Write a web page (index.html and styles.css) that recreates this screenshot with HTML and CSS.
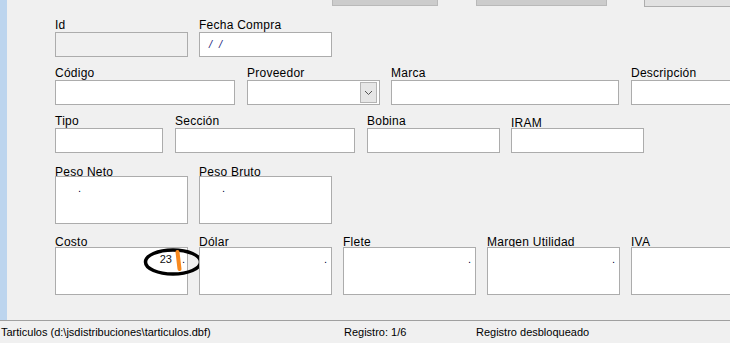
FILE: index.html
```html
<!DOCTYPE html>
<html lang="es">
<head>
    <meta charset="UTF-8">
    <title>Articulos</title>
    <link rel="stylesheet" href="styles.css">
</head>
<body>
    <div class="window">
        <div class="main">
            <div class="strip"></div>
            <div class="form">
                <div class="toolbar">
                    <div class="tab tab-one"></div>
                    <div class="tab tab-two"></div>
                    <div class="tab tab-three"></div>
                </div>

                <div class="row row-1">
                    <div class="field w133">
                        <label>Id</label>
                        <div class="box disabled"></div>
                    </div>
                    <div class="field w133">
                        <label>Fecha Compra</label>
                        <div class="box"><span class="date">/ /</span></div>
                    </div>
                </div>

                <div class="row row-2">
                    <div class="field w180">
                        <label>Código</label>
                        <div class="box"></div>
                    </div>
                    <div class="field w133">
                        <label>Proveedor</label>
                        <div class="box combo">
                            <span class="combo-btn">
                                <svg width="9" height="6" viewBox="0 0 9 6"><path d="M1 1l3.5 3.5L8 1" fill="none" stroke="#555" stroke-width="1"/></svg>
                            </span>
                        </div>
                    </div>
                    <div class="field w228 pull">
                        <label>Marca</label>
                        <div class="box"></div>
                    </div>
                    <div class="field w133">
                        <label>Descripción</label>
                        <div class="box"></div>
                    </div>
                </div>

                <div class="row row-3">
                    <div class="field w108">
                        <label>Tipo</label>
                        <div class="box"></div>
                    </div>
                    <div class="field w180">
                        <label>Sección</label>
                        <div class="box"></div>
                    </div>
                    <div class="field w133">
                        <label>Bobina</label>
                        <div class="box"></div>
                    </div>
                    <div class="field w133 pull">
                        <label class="low">IRAM</label>
                        <div class="box"></div>
                    </div>
                </div>

                <div class="row row-4">
                    <div class="field w133">
                        <label>Peso Neto</label>
                        <div class="box tall left"><span class="num">.</span></div>
                    </div>
                    <div class="field w133">
                        <label>Peso Bruto</label>
                        <div class="box tall left"><span class="num">.</span></div>
                    </div>
                </div>

                <div class="row row-5">
                    <div class="field w133">
                        <label>Costo</label>
                        <div class="box tall right costo">
                            <span class="num dark">23</span><span class="gap"></span><span class="num">.</span>
                            <svg class="mark" width="64" height="32" viewBox="0 0 64 32">
                                <ellipse cx="31" cy="15" rx="27.5" ry="12" fill="none" stroke="#000" stroke-width="3.5"/>
                                <path d="M35.5 5L37.5 22" stroke="#f7891f" stroke-width="4" stroke-linecap="round"/>
                            </svg>
                        </div>
                    </div>
                    <div class="field w133">
                        <label>Dólar</label>
                        <div class="box tall right"><span class="num">.</span></div>
                    </div>
                    <div class="field w133">
                        <label>Flete</label>
                        <div class="box tall right"><span class="num">.</span></div>
                    </div>
                    <div class="field w133">
                        <label>Margen Utilidad</label>
                        <div class="box tall right"><span class="num">.</span></div>
                    </div>
                    <div class="field w133">
                        <label>IVA</label>
                        <div class="box tall"></div>
                    </div>
                </div>
            </div>
        </div>

        <footer class="status">
            <span class="status-file">Tarticulos (d:\jsdistribuciones\tarticulos.dbf)</span>
            <span class="status-rec">Registro: 1/6</span>
            <span class="status-lock">Registro desbloqueado</span>
        </footer>
    </div>
</body>
</html>
```

FILE: styles.css
```css
body {
    margin: 0;
    padding: 0;
    background: #f0f0f0;
    font-family: 'Liberation Sans', Arial, sans-serif;
    color: #000;
    overflow: hidden;
}

.window {
    width: 730px;
    height: 343px;
    display: flex;
    flex-direction: column;
    overflow: hidden;
}

.main {
    display: flex;
    height: 320px;
    border-bottom: 1px solid #a0a0a0;
}

.strip {
    width: 7px;
    flex-shrink: 0;
    background: #bdd5ee;
}

.form {
    flex: 1;
    padding-left: 48px;
    overflow: hidden;
}

/* tabs cut off at the top */
.toolbar {
    display: flex;
    height: 7px;
}

.tab {
    flex-shrink: 0;
    height: 6px;
    box-sizing: border-box;
    background: #cccccc;
    border: 1px solid #b9b9b9;
    border-top: none;
}

.tab-one {
    margin-left: 277px;
    width: 106px;
}

.tab-two {
    margin-left: 38px;
    width: 131px;
}

.tab-three {
    margin-left: 37px;
    width: 100px;
    height: 7px;
    background: #e1e1e1;
    border-color: #adadad;
}

.row {
    display: flex;
    gap: 11px;
}

.row-1 { margin-top: 11px; }
.row-2 { margin-top: 9px; gap: 12px; }
.row-3 { margin-top: 9px; gap: 12px; }
.row-4 { margin-top: 12px; }
.row-5 { margin-top: 11px; }

.field {
    display: flex;
    flex-direction: column;
    flex-shrink: 0;
}

.field.pull {
    margin-left: -1px;
}

.w108 { width: 108px; }
.w133 { width: 133px; }
.w180 { width: 180px; }
.w228 { width: 228px; }

label {
    display: block;
    height: 14px;
    line-height: 14px;
    font-size: 12px;
    letter-spacing: 0.25px;
    white-space: nowrap;
}

label.low {
    position: relative;
    top: 2px;
}

.row-4 label { margin-bottom: -3px; }
.row-5 label { margin-bottom: -2px; }

.box {
    position: relative;
    height: 25px;
    box-sizing: border-box;
    border: 1px solid #acacac;
    background: #fff;
}

.box.disabled {
    background: #f0f0f0;
}

.box.tall {
    height: 48px;
    display: flex;
    align-items: flex-start;
    padding-top: 5px;
}

.box.left {
    padding-left: 22px;
}

.box.right {
    justify-content: flex-end;
    padding-right: 4px;
}

.box.costo {
    padding-right: 2px;
}

.num {
    font-size: 11px;
    line-height: 13px;
    color: #000040;
}

.num.dark {
    color: #111;
}

.gap {
    width: 10px;
}

.date {
    display: block;
    padding: 4px 0 0 9px;
    font-size: 11px;
    line-height: 14px;
    font-style: italic;
    color: #1b1b7a;
    letter-spacing: 2px;
}

.combo {
    display: flex;
    justify-content: flex-end;
    align-items: center;
    padding-right: 2px;
}

.combo-btn {
    width: 17px;
    height: 21px;
    box-sizing: border-box;
    background: #e6e6e6;
    border: 1px solid #b4b4b4;
    display: flex;
    align-items: center;
    justify-content: center;
}

.mark {
    position: absolute;
    left: 86px;
    top: -1px;
}

.status {
    display: flex;
    height: 22px;
    padding-left: 1px;
    font-size: 11px;
    line-height: 22px;
    white-space: nowrap;
}

.status-file { width: 343px; }
.status-rec { width: 132px; }
```
